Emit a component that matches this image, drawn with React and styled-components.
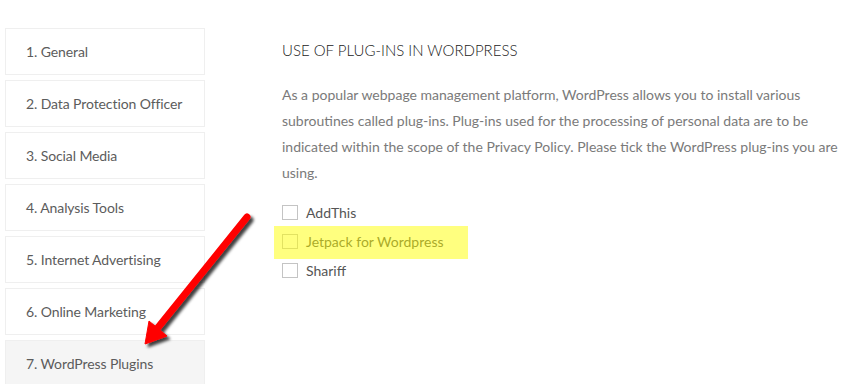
import React from "react";
import styled, { createGlobalStyle } from "styled-components";

const Global = createGlobalStyle`
  html, body { margin: 0; padding: 0; background: #fff; }
  body { font-family: Lato, "Open Sans", sans-serif; width: 852px; height: 384px; overflow: hidden; }
  * { box-sizing: border-box; }
`;

const Page = styled.div`
  position: relative;
  display: flex;
  align-items: flex-start;
  width: 852px;
  height: 384px;
  overflow: hidden;
`;

const Sidebar = styled.nav`
  display: flex;
  flex-direction: column;
  gap: 5px;
  padding: 28px 0 0 5px;
  width: 205px;
  flex-shrink: 0;
`;

const NavItem = styled.div`
  height: 47px;
  display: flex;
  align-items: center;
  padding-left: 20px;
  border: 1px solid #efefef;
  background: ${(p) => (p.$active ? "#f5f5f5" : "#fff")};
  color: #5c5c5c;
  font-size: 14px;
  letter-spacing: -0.1px;
`;

const Content = styled.main`
  position: relative;
  padding: 40px 0 0 77px;
  width: 640px;
`;

const Heading = styled.h2`
  margin: 0;
  font-size: 15px;
  font-weight: 300;
  color: #222;
  line-height: 20px;
`;

const Paragraph = styled.p`
  margin: 22px 0 0;
  font-size: 14px;
  line-height: 26px;
  color: #7a7a7a;
  width: 556px;
`;

const Options = styled.div`
  display: flex;
  flex-direction: column;
  gap: 14px;
  margin-top: 19px;
`;

const Option = styled.label`
  display: flex;
  align-items: center;
  gap: 8px;
  font-size: 14px;
  color: #555;
  line-height: 15px;
`;

const Box = styled.span`
  width: 16px;
  height: 15px;
  border: 1px solid #c4c4c4;
  background: #fff;
  display: inline-block;
`;

const Highlight = styled.div`
  position: absolute;
  left: 274px;
  top: 226px;
  width: 194px;
  height: 33px;
  background: rgba(255, 255, 0, 0.5);
  pointer-events: none;
`;

const Arrow = styled.svg`
  position: absolute;
  left: 0;
  top: 0;
  pointer-events: none;
`;

const items = [
  "1. General",
  "2. Data Protection Officer",
  "3. Social Media",
  "4. Analysis Tools",
  "5. Internet Advertising",
  "6. Online Marketing",
  "7. WordPress Plugins",
];

export default function App() {
  return (
    <>
      <Global />
      <Page>
        <Sidebar>
          {items.map((t, i) => (
            <NavItem key={t} $active={i === items.length - 1}>
              {t}
            </NavItem>
          ))}
        </Sidebar>
        <Content>
          <Heading>USE OF PLUG-INS IN WORDPRESS</Heading>
          <Paragraph>
            As a popular webpage management platform, WordPress allows you to install various
            subroutines called plug-ins. Plug-ins used for the processing of personal data are to be
            indicated within the scope of the Privacy Policy. Please tick the WordPress plug-ins you are
            using.
          </Paragraph>
          <Options>
            <Option><Box />AddThis</Option>
            <Option><Box />Jetpack for Wordpress</Option>
            <Option><Box />Shariff</Option>
          </Options>
        </Content>
        <Highlight />
        <Arrow width="852" height="384" viewBox="0 0 852 384">
          <defs>
            <filter id="sh" x="-20%" y="-20%" width="140%" height="140%">
              <feDropShadow dx="3" dy="3" stdDeviation="1.6" floodColor="#000" floodOpacity="0.75" />
            </filter>
          </defs>
          <g filter="url(#sh)" fill="#ff0000" stroke="#ff0000">
            <line x1="247" y1="217" x2="156" y2="330" strokeWidth="7" strokeLinecap="round" />
            <polygon points="145,344 149,321 167,336" strokeWidth="1" strokeLinejoin="round" />
          </g>
        </Arrow>
      </Page>
    </>
  );
}
